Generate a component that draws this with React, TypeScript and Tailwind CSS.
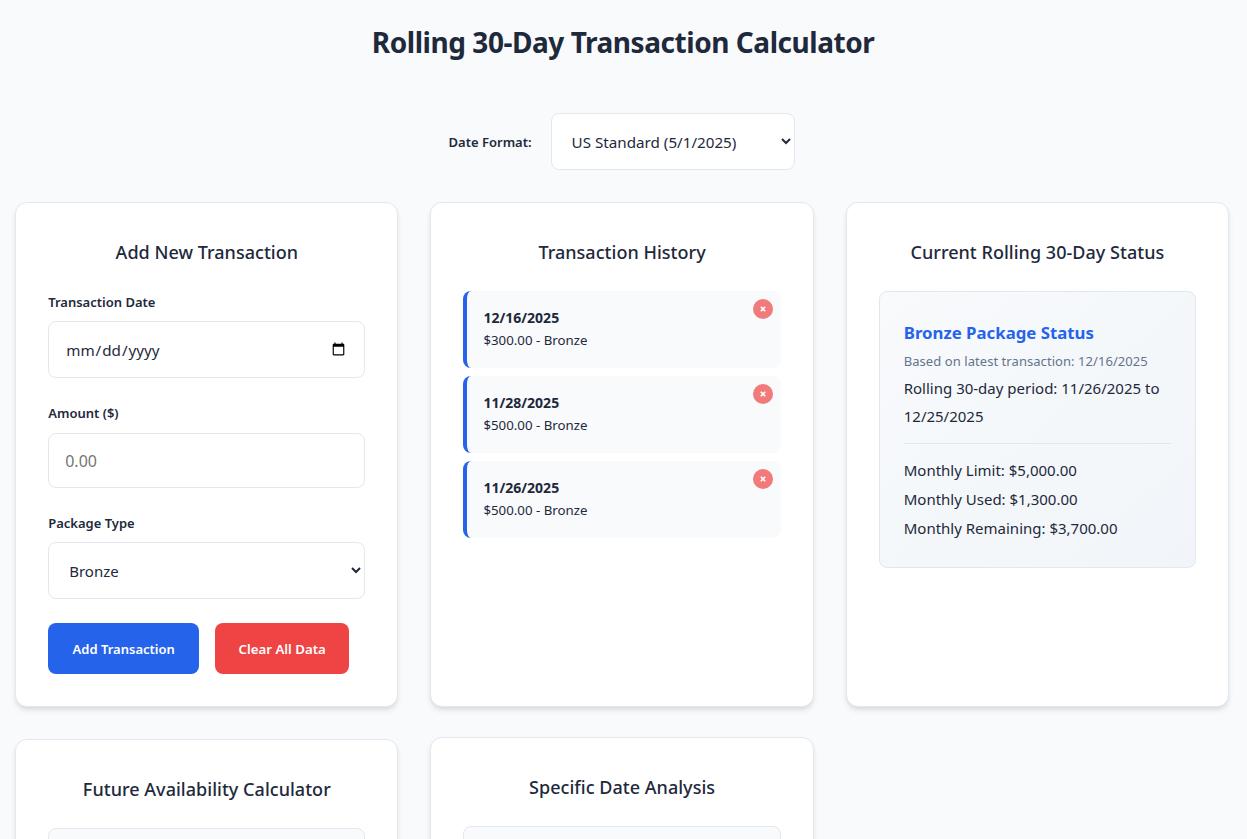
const font = "font-['Noto_Sans',sans-serif]";

const transactions = [
  { date: '12/16/2025', amount: '$300.00' },
  { date: '11/28/2025', amount: '$500.00' },
  { date: '11/26/2025', amount: '$500.00' },
];

function Card({ title, className = '', children }: { title: string; className?: string; children?: React.ReactNode }) {
  return (
    <div className={`rounded-xl border border-[#e2e8f0] bg-white px-8 pt-8 pb-8 shadow-[0_4px_6px_-1px_rgba(0,0,0,0.1),0_2px_4px_-1px_rgba(0,0,0,0.06)] ${className}`}>
      <h2 className="mb-[22px] text-center text-[18px] font-medium leading-[34px] tracking-[0.03px] text-[#1e293b]">{title}</h2>
      {children}
    </div>
  );
}

function Field({ label, children }: { label: string; children: React.ReactNode }) {
  return (
    <div className="mb-6">
      <label className="mb-2 block text-[13px] font-semibold leading-[22.4px] text-[#1e293b]">{label}</label>
      {children}
    </div>
  );
}

export default function App() {
  return (
    <div className={`${font} h-[839px] overflow-hidden bg-[#f8fafc] pl-[15.2px] pr-[18px] text-[#1e293b]`}>
      <h1 className="mb-12 pt-5 pl-0.5 text-center text-[28px] font-bold leading-[45px] tracking-[-0.45px]">Rolling 30-Day Transaction Calculator</h1>

      <div className="mb-8 flex items-center justify-center gap-[19px] pr-[1px]">
        <label className="pt-[3px] text-[13px] font-semibold">Date Format:</label>
        <select className="h-[57px] w-[244px] rounded-lg border border-[#e2e8f0] bg-white px-4 text-[15.2px]">
          <option>US Standard (5/1/2025)</option>
        </select>
      </div>

      <div className="grid grid-cols-3 gap-8">
        <Card title="Add New Transaction">
          <Field label="Transaction Date">
            <input type="date" className="h-[57px] w-full rounded-lg border border-[#e2e8f0] bg-white px-4 text-[15.2px]" />
          </Field>
          <Field label="Amount ($)">
            <input type="number" placeholder="0.00" className="h-[55px] w-full rounded-lg border border-[#e2e8f0] bg-white px-4 pt-0.5 text-[16px] placeholder:text-[#757575]" />
          </Field>
          <Field label="Package Type">
            <select className="h-[57px] w-full rounded-lg border border-[#e2e8f0] bg-white px-4 text-[15px]">
              <option>Bronze</option>
            </select>
          </Field>
          <div className="flex gap-4">
            <button className="h-[51px] w-[151px] rounded-lg bg-[#2563eb] pt-0.5 text-[13px] font-semibold text-white">Add Transaction</button>
            <button className="h-[51px] w-[134px] rounded-lg bg-[#ef4444] pt-0.5 text-[13.25px] font-semibold text-white">Clear All Data</button>
          </div>
        </Card>

        <Card title="Transaction History">
          <div className="flex flex-col gap-2">
            {transactions.map((t) => (
              <div key={t.date} className="relative h-[77px] rounded-lg border-l-4 border-[#2563eb] bg-[#f8fafc] px-4 pt-4">
                <div className="text-[14px] font-bold leading-[22.4px]">{t.date}</div>
                <div className="text-[13.25px] leading-[22.4px]">{t.amount} - Bronze</div>
                <button className="absolute top-2 right-2 flex h-5 w-5 items-center justify-center rounded-full bg-[#ef4444] opacity-70">
                  <svg width="6" height="6" viewBox="0 0 6 6" fill="none" stroke="white" strokeWidth="1.6">
                    <path d="M0.8 0.8 L5.2 5.2 M5.2 0.8 L0.8 5.2" />
                  </svg>
                </button>
              </div>
            ))}
          </div>
        </Card>

        <Card title="Current Rolling 30-Day Status">
          <div className="rounded-lg border border-[#e2e8f0] bg-gradient-to-br from-[#f8fafc] to-[#f1f5f9] px-6 pt-[26.7px] pb-[24.3px] text-[15px] leading-[28.8px]">
            <h3 className="mb-[1.6px] text-[16.8px] font-bold leading-[28.8px] text-[#2563eb]">Bronze Package Status</h3>
            <div className="mb-[-0.6px] text-[13px] leading-[25.2px] tracking-[0.06px] text-[#64748b]">Based on latest transaction: 12/16/2025</div>
            <div>Rolling 30-day period: 11/26/2025 to 12/25/2025</div>
            <div className="my-3 border-t border-[#e2e8f0]" />
            <div>Monthly Limit: $5,000.00</div>
            <div>Monthly Used: $1,300.00</div>
            <div>Monthly Remaining: $3,700.00</div>
          </div>
        </Card>

        <Card title="Future Availability Calculator">
          <div className="h-40 rounded-lg border border-[#e2e8f0] bg-[#f8fafc]" />
        </Card>

        <Card title="Specific Date Analysis" className="-translate-y-0.5">
          <div className="h-40 rounded-lg border border-[#e2e8f0] bg-[#f8fafc]" />
        </Card>
      </div>
    </div>
  );
}
